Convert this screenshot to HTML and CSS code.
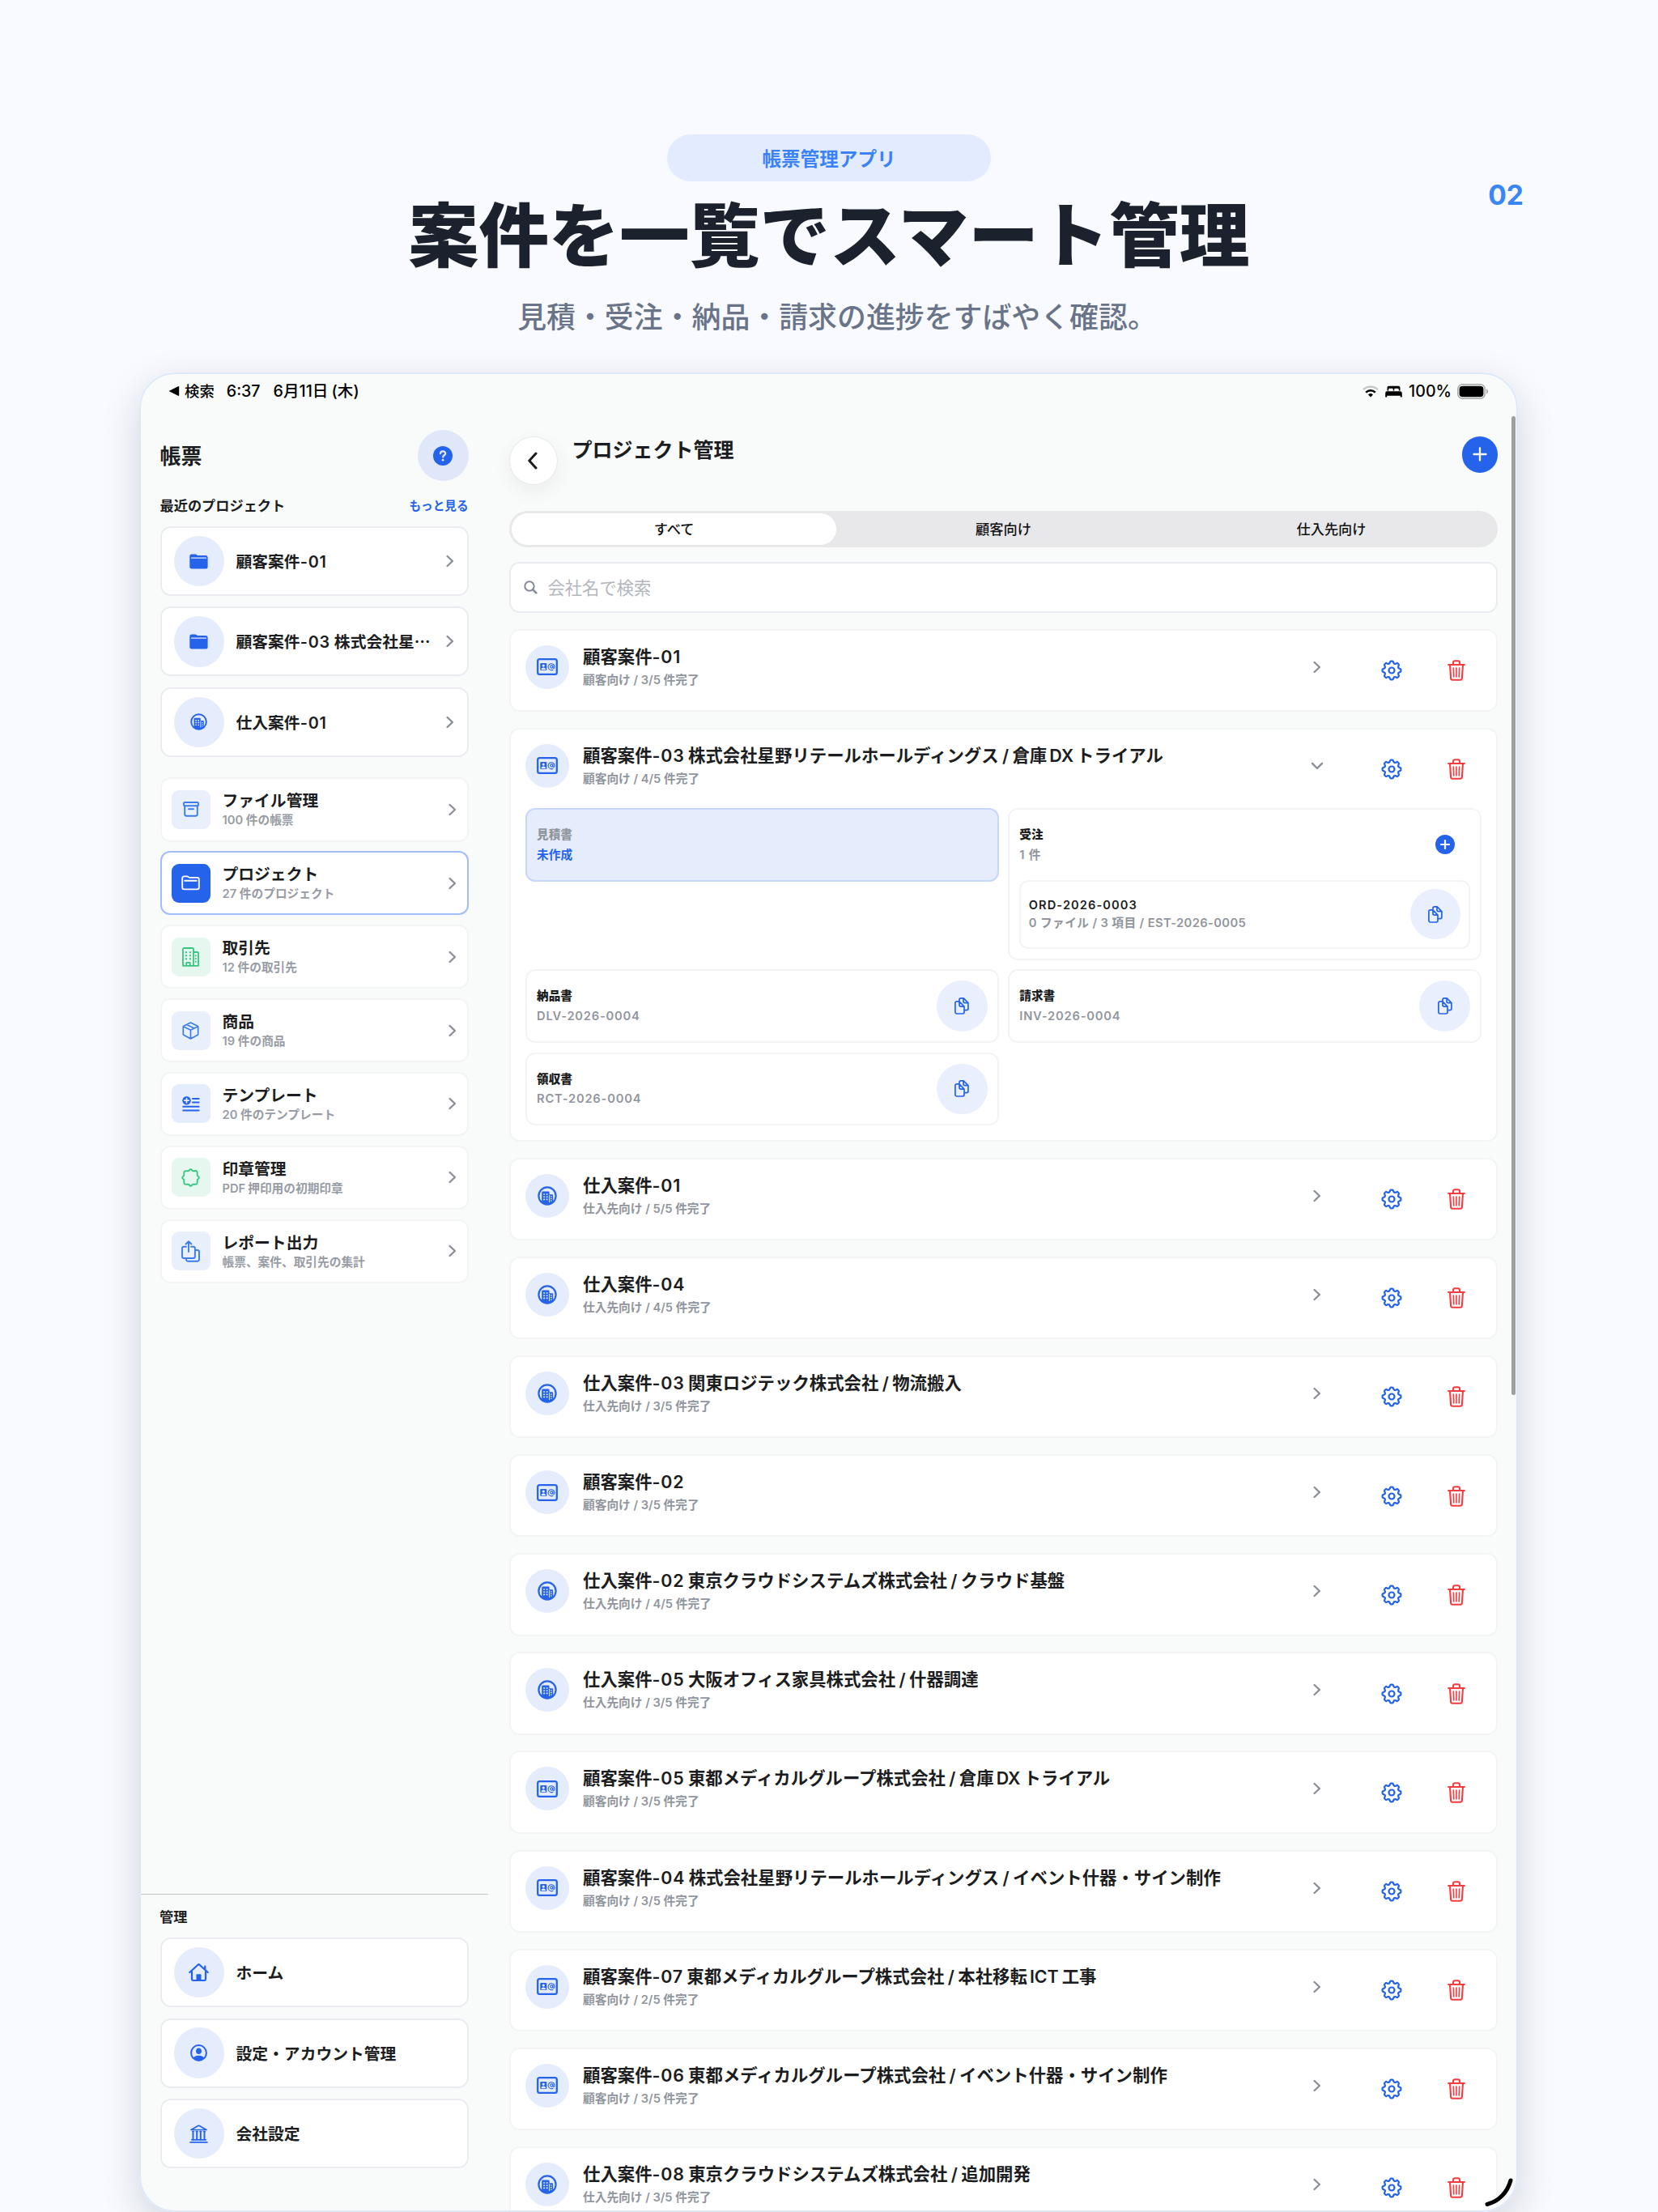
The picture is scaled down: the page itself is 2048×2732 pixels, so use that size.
FILE: index.html
```html
<!DOCTYPE html>
<html lang="ja">
<head>
<meta charset="utf-8">
<title>プロジェクト管理</title>
<link rel="stylesheet" href="styles.css">
</head>
<body>
<svg class="sprite" aria-hidden="true">
  <defs>
    <path id="tooth" d="M-3.44-8.31Q-2.54-8.68-2.2-9.6L-1.9-10.6Q-1.7-11.4-.9-11.4H.9Q1.7-11.4 1.9-10.6L2.2-9.6Q2.54-8.68 3.44-8.31"/>
  </defs>
  <symbol id="i-gear" viewBox="-13 -13 26 26"><g fill="none" stroke="currentColor" stroke-width="2.2" stroke-linecap="round">
    <use href="#tooth"/><use href="#tooth" transform="rotate(45)"/><use href="#tooth" transform="rotate(90)"/><use href="#tooth" transform="rotate(135)"/><use href="#tooth" transform="rotate(180)"/><use href="#tooth" transform="rotate(225)"/><use href="#tooth" transform="rotate(270)"/><use href="#tooth" transform="rotate(315)"/>
    <circle r="3.5"/></g></symbol>
  <symbol id="i-trash" viewBox="0 0 22 26"><g fill="none" stroke="currentColor" stroke-width="2.1" stroke-linecap="round" stroke-linejoin="round"><path d="M7 6V3.2a2 2 0 0 1 2-2h4a2 2 0 0 1 2 2V6M1.1 6H20.9M3 6l1.1 16.7a2.1 2.1 0 0 0 2.1 2h9.6a2.1 2.1 0 0 0 2.1-2L19 6"/><path stroke-width="1.6" d="M7.4 10l.4 11M11 10v11M14.6 10l-.4 11"/></g></symbol>
  <symbol id="i-right" viewBox="0 0 10 16"><path d="M1.6 2l6.3 6-6.3 6" fill="none" stroke="currentColor" stroke-width="2.4" stroke-linecap="round" stroke-linejoin="round"/></symbol>
  <symbol id="i-down" viewBox="0 0 16 10"><path d="M2 1.8l6 6.2 6-6.2" fill="none" stroke="currentColor" stroke-width="2.4" stroke-linecap="round" stroke-linejoin="round"/></symbol>
  <symbol id="i-back" viewBox="0 0 14 22"><path d="M11 2L2.8 11 11 20" fill="none" stroke="currentColor" stroke-width="3" stroke-linecap="round" stroke-linejoin="round"/></symbol>
  <symbol id="i-folder-fill" viewBox="0 0 23 19"><path fill="currentColor" d="M.3 2.8A2.5 2.5 0 0 1 2.8.4h4.4c1.6 0 1.8 1.5 3.4 1.5h9.3a2.6 2.6 0 0 1 2.7 2.4v11.6a2.6 2.6 0 0 1-2.7 2.6H3a2.7 2.7 0 0 1-2.7-2.7z"/><path d="M2.6 5.2h17.8" stroke="#e5ecfc" stroke-width="1.3" stroke-linecap="round"/></symbol>
  <symbol id="i-folder" viewBox="0 0 23 19"><path fill="none" stroke="currentColor" stroke-width="1.9" stroke-linejoin="round" d="M1.2 3.8a2.3 2.3 0 0 1 2.3-2.4h3.6c1.5 0 1.7 1.5 3.2 1.5h9.2a2.3 2.3 0 0 1 2.3 2.3v9.9a2.3 2.3 0 0 1-2.3 2.3h-16a2.3 2.3 0 0 1-2.3-2.3zM3.5 6.8h16"/></symbol>
  <symbol id="i-city" viewBox="0 0 24 24"><circle cx="12" cy="12" r="10.6" fill="none" stroke="currentColor" stroke-width="2.2"/><path fill="currentColor" d="M4.2 18.5h1V8a1.4 1.4 0 0 1 1.4-1.4h6.6A1.4 1.4 0 0 1 14.6 8v2.3h3.4a1.2 1.2 0 0 1 1.2 1.2v7h.8A10 10 0 0 1 4.2 18.500z"/><path stroke="#e5ecfc" stroke-width="1.6" d="M7.2 10h1.9M10.7 10h1.9M7.2 13.2h1.9M10.7 13.2h1.9M7.2 16.4h1.9M10.7 16.4h1.9"/><path stroke="#e5ecfc" stroke-width="1" d="M14.6 11v9M16 13h1.8M16 15.5h1.8M16 18h1.8"/></symbol>
  <symbol id="i-card" viewBox="0 0 26 21"><rect x="1.2" y="1.2" width="23.6" height="18.6" rx="2.4" fill="none" stroke="currentColor" stroke-width="2.3"/><rect x="4.3" y="6" width="8" height="9" rx="1" fill="currentColor"/><circle cx="8.3" cy="9.1" r="1.6" fill="#e5ecfc"/><path d="M5.5 14.2c0-3.7 5.6-3.7 5.6 0z" fill="#e5ecfc"/><g fill="none" stroke="currentColor" stroke-width="1.1"><path d="M20.4 14a4 4 0 1 1 1.7-3.5c0 2.5-2.2 2.3-2.2.7V8.900"/><circle cx="18.3" cy="10.5" r="1.6"/></g></symbol>
  <symbol id="i-copy" viewBox="0 0 18 21"><g fill="none" stroke="currentColor" stroke-width="1.7" stroke-linejoin="round"><path d="M6 4.8V2.8A1.9 1.9 0 0 1 7.9.9h3.3L16.9 6.6v7.2a1.9 1.9 0 0 1-1.9 1.9h-2.6M11 1v3.8a1.8 1.8 0 0 0 1.8 1.8h4"/><path d="M2.8 4.9h3.1l6.1 6.2v7a1.9 1.9 0 0 1-1.9 1.9H2.8A1.9 1.9 0 0 1 .9 18.1V6.8a1.9 1.9 0 0 1 1.9-1.9zM6 5v4.3a1.8 1.8 0 0 0 1.8 1.8H12"/></g></symbol>
  <symbol id="i-plus" viewBox="0 0 20 20"><path d="M10 2.5v15M2.500 10h15" stroke="currentColor" stroke-width="2.3" stroke-linecap="round"/></symbol>
</svg>

<header class="hero">
  <div class="hero-pill">帳票管理アプリ</div>
  <h1>案件を一覧でスマート管理</h1>
  <p>見積・受注・納品・請求の進捗をすばやく確認。</p>
  <div class="hero-no">02</div>
</header>

<div class="device">
  <div class="status">
    <div class="status-l">
      <svg width="14" height="14" viewBox="0 0 14 14"><path d="M.5 7L12 1.2a.8.8 0 0 1 1.2.8v10a.8.8 0 0 1-1.2.8z"/></svg>
      <span class="s-back">検索</span><span class="s-time">6:37</span><span class="s-date">6月11日 (木)</span>
    </div>
    <div class="status-r">
      <svg class="wifi" width="20" height="15" viewBox="0 0 20 15"><g fill="none" stroke="#000" stroke-width="2.4"><path stroke="#c4c6c5" d="M1 5.2a13 13 0 0 1 18 0"/><path d="M4.2 8.6a8.4 8.4 0 0 1 11.6 0"/></g><path d="M10 14.6l-3-3.2a4.4 4.4 0 0 1 6 0z"/></svg>
      <svg class="bed" width="21" height="15" viewBox="0 0 21 15"><path d="M2.5 6.5V2.8A2 2 0 0 1 4.5.8h12a2 2 0 0 1 2 2v3.7h-1.7V5a1.2 1.2 0 0 0-1.2-1.2h-3.2A1.2 1.2 0 0 0 11.2 5v1.5H9.8V5a1.2 1.2 0 0 0-1.2-1.2H5.4A1.2 1.2 0 0 0 4.2 5v1.5zM2.4 7.2h16.2A2.2 2.2 0 0 1 20.8 9.4V14.6H18.8V12.8H2.2V14.6H.2V9.4A2.2 2.2 0 0 1 2.4 7.200z"/></svg>
      <span>100%</span>
      <svg class="battery" width="39" height="19" viewBox="0 0 39 19"><rect x=".8" y=".8" width="33.4" height="17.4" rx="5.6" fill="none" stroke="#a6a8a7" stroke-width="1.5"/><rect x="2.6" y="2.7" width="29.8" height="13.6" rx="4"/><path d="M36 6.3a3.5 3.5 0 0 1 0 6.4z" fill="#a6a8a7"/></svg>
    </div>
  </div>

  <div class="body">
    <aside class="side">
      <div class="side-head"><h2>帳票</h2>
        <div class="help"><svg width="24" height="24" viewBox="0 0 24 24"><circle cx="12" cy="12" r="12" fill="#2563eb"/><path d="M9 9.2c.1-3.6 6.2-3.6 6.2-.2 0 2.3-3 2.2-3 4.500" fill="none" stroke="#e0e7f8" stroke-width="2.300" stroke-linecap="round"/><circle cx="12.1" cy="17.2" r="1.4" fill="#e0e7f8"/></svg></div></div>
      <div class="side-sub"><h3>最近のプロジェクト</h3><a>もっと見る</a></div>
      <div class="stack">
        <div class="link"><span class="dot"><svg width="23" height="19"><use href="#i-folder-fill"/></svg></span><b>顧客案件<i>-01</i></b><svg class="chev" width="10" height="16"><use href="#i-right"/></svg></div>
        <div class="link"><span class="dot"><svg width="23" height="19"><use href="#i-folder-fill"/></svg></span><b>顧客案件<i>-03</i> 株式会社星⋯</b><svg class="chev" width="10" height="16"><use href="#i-right"/></svg></div>
        <div class="link"><span class="dot"><svg width="21" height="21"><use href="#i-city"/></svg></span><b>仕入案件<i>-01</i></b><svg class="chev" width="10" height="16"><use href="#i-right"/></svg></div>
      </div>
      <nav class="menu">
        <div class="item"><span class="tile t-soft"><svg width="20" height="19" viewBox="0 0 20 19" fill="none" stroke="currentColor" stroke-width="1.9"><rect x="1" y="1" width="18" height="4.2" rx="1.3"/><path d="M2.2 5.2v10.2a2.3 2.3 0 0 0 2.3 2.3h11a2.3 2.3 0 0 0 2.3-2.3V5.2M7 9.3h6" stroke-linecap="round"/></svg></span><div><b>ファイル管理</b><small>100 件の帳票</small></div><svg class="chev" width="10" height="16"><use href="#i-right"/></svg></div>
        <div class="item on"><span class="tile t-on"><svg width="23" height="19"><use href="#i-folder"/></svg></span><div><b>プロジェクト</b><small>27 件のプロジェクト</small></div><svg class="chev" width="10" height="16"><use href="#i-right"/></svg></div>
        <div class="item"><span class="tile t-green"><svg width="21" height="24" viewBox="0 0 21 24" fill="none" stroke="currentColor" stroke-width="1.8" stroke-linejoin="round"><path d="M1 22.8V2.2A1.2 1.2 0 0 1 2.2 1h10.6A1.2 1.2 0 0 1 14 2.2v20.6zM14 6h4.8A1.2 1.2 0 0 1 20 7.2v15.6h-6M5.3 22.8v-4h4.4v4"/><path stroke-width="2" d="M4 6.2h2M9 6.2h2M4 10.2h2M9 10.2h2M4 14.2h2M9 14.2h2M16 10.2h1.6M16 14h1.6M16 17.8h1.6"/></svg></span><div><b>取引先</b><small>12 件の取引先</small></div><svg class="chev" width="10" height="16"><use href="#i-right"/></svg></div>
        <div class="item"><span class="tile t-soft"><svg width="21" height="22" viewBox="0 0 21 22" fill="none" stroke="currentColor" stroke-width="1.7" stroke-linejoin="round"><path d="M10.5 1l8.6 4.2a1 1 0 0 1 .6.9v9.3a1 1 0 0 1-.6.9l-8.6 4.700-8.6-4.700a1 1 0 0 1-.6-.9V6.100a1 1 0 0 1 .6-.9zM1.500 5.700l9 4.500 9-4.500M10.500 10.200V21M5.600 3.500l9.200 4.500"/></svg></span><div><b>商品</b><small>19 件の商品</small></div><svg class="chev" width="10" height="16"><use href="#i-right"/></svg></div>
        <div class="item"><span class="tile t-blue"><svg width="22" height="19" viewBox="0 0 22 19" fill="none" stroke="currentColor" stroke-width="2" stroke-linecap="round"><circle cx="5.5" cy="5.2" r="5.2" fill="currentColor" stroke="none"/><path stroke="#e5ecfc" stroke-width="1.7" d="M5.5 2.5v5.4M2.8 5.2h5.4"/><path d="M13 3h7.6M13 7.6h7.6M1.2 12.8h19.4M1.2 17.6h19.4"/></svg></span><div><b>テンプレート</b><small>20 件のテンプレート</small></div><svg class="chev" width="10" height="16"><use href="#i-right"/></svg></div>
        <div class="item"><span class="tile t-green"><svg width="23" height="23" viewBox="0 0 23 23" fill="none" stroke="currentColor" stroke-width="1.9" stroke-linejoin="round"><path d="M11.5 1.3Q12.4 1.3 13.2 2.4Q14 3.5 15.3 3.3Q18.7 2.6 19.2 3.8Q19.9 4.4 19.6 7.7Q19.5 9 20.6 9.8Q23.1 11.5 20.6 13.2Q19.5 14 19.7 15.3Q20 18.6 19.2 19.2Q18.6 19.9 15.3 19.7Q14 19.5 13.2 20.6Q11.5 23 9.8 20.6Q9 19.5 7.7 19.7Q4.4 20 3.8 19.2Q3.1 18.6 3.3 15.3Q3.5 14 2.4 13.2Q0 11.5 2.4 9.8Q3.5 9 3.3 7.7Q3 4.4 3.8 3.8Q4.4 3.1 7.7 3.3Q9 3.5 9.8 2.4Q10.6 1.3 11.5 1.3z"/></svg></span><div><b>印章管理</b><small><i class="gap-r">PDF</i>押印用の初期印章</small></div><svg class="chev" width="10" height="16"><use href="#i-right"/></svg></div>
        <div class="item"><span class="tile t-soft"><svg width="23" height="27" viewBox="0 0 23 27" fill="none" stroke="currentColor" stroke-width="1.9" stroke-linecap="round" stroke-linejoin="round"><path d="M6 7.8H3.3A2.3 2.3 0 0 0 1 10.1v9.6A2.3 2.3 0 0 0 3.3 22h11.3a2.3 2.3 0 0 0 2.3-2.3v-9.6a2.3 2.3 0 0 0-2.3-2.3H12M9 14V1.3M5.6 4.5L9 1.2l3.4 3.3M17.2 12h2.5a2.3 2.3 0 0 1 2.3 2.3v9.2a2.3 2.3 0 0 1-2.3 2.3H8.3A2.3 2.3 0 0 1 6 23.5v-1.3"/></svg></span><div><b>レポート出力</b><small>帳票、案件、取引先の集計</small></div><svg class="chev" width="10" height="16"><use href="#i-right"/></svg></div>
      </nav>
      <div class="side-foot">
        <h3>管理</h3>
        <div class="stack">
          <div class="link"><span class="dot"><svg width="25" height="22" viewBox="0 0 25 22" fill="none" stroke="currentColor" stroke-width="2.2" stroke-linecap="round" stroke-linejoin="round"><path d="M1.3 11L11.5 1.7a1.5 1.5 0 0 1 2 0L23.7 11M4 9.5v9.7a1.8 1.8 0 0 0 1.8 1.8h13.4a1.8 1.8 0 0 0 1.8-1.8V9.5M20.3 7.3V3.6"/><path d="M9.5 21v-6.8a1 1 0 0 1 1-1h4a1 1 0 0 1 1 1V21z" fill="currentColor" stroke="none"/></svg></span><b>ホーム</b></div>
          <div class="link"><span class="dot"><svg width="21" height="21" viewBox="0 0 21 21"><circle cx="10.5" cy="10.5" r="9.4" fill="none" stroke="currentColor" stroke-width="2"/><ellipse cx="10.5" cy="8.3" rx="3.4" ry="3.8" fill="currentColor"/><path d="M3.8 17c2-4.4 11.4-4.4 13.4 0a9.4 9.4 0 0 1-13.4 0z" fill="currentColor"/></svg></span><b>設定・アカウント管理</b></div>
          <div class="link"><span class="dot"><svg width="23" height="23" viewBox="0 0 23 23" fill="none" stroke="currentColor" stroke-width="1.7" stroke-linecap="round" stroke-linejoin="round"><path d="M2 6.5h19L12.3 1.6a1.7 1.7 0 0 0-1.6 0zM1 21.8h21M2.8 18.8h17.4"/><path d="M4.5 8.5v10M9.2 8.5v10M13.8 8.5v10M18.5 8.5v10" stroke-width="2"/><path d="M3.3 8.6h2.4M8 8.6h2.4M12.6 8.6H15M17.3 8.6h2.4" stroke-width="1"/></svg></span><b>会社設定</b></div>
        </div>
      </div>
    </aside>

    <main class="main">
      <div class="main-head"><span class="back"><svg width="14" height="22"><use href="#i-back"/></svg></span><h2>プロジェクト管理</h2><span class="add"><svg width="20" height="20"><use href="#i-plus"/></svg></span></div>
      <div class="seg"><span class="sel">すべて</span><span>顧客向け</span><span>仕入先向け</span></div>
      <div class="search"><svg width="17" height="17" viewBox="0 0 17 17" fill="none" stroke="#858b96" stroke-width="2" stroke-linecap="round"><circle cx="7" cy="7" r="5.7"/><path d="M11.3 11.3l4 4" stroke-width="2.6"/></svg><span>会社名で検索</span></div>
      <div class="list">
        <section class="row"><div class="top"><span class="av"><svg width="26" height="21"><use href="#i-card"/></svg></span><div class="tx"><b>顧客案件<i>-01</i></b><small>顧客向け / 3/5 件完了</small></div><span class="cv"><svg width="10" height="16"><use href="#i-right"/></svg></span><span class="gear"><svg width="26" height="26"><use href="#i-gear"/></svg></span><span class="del"><svg width="22" height="26"><use href="#i-trash"/></svg></span></div></section>
        <section class="row"><div class="top"><span class="av"><svg width="26" height="21"><use href="#i-card"/></svg></span><div class="tx"><b>顧客案件<i>-03</i> 株式会社星野リテールホールディングス / 倉庫<i class="gap">DX</i>トライアル</b><small>顧客向け / 4/5 件完了</small></div><span class="cv"><svg width="16" height="10"><use href="#i-down"/></svg></span><span class="gear"><svg width="26" height="26"><use href="#i-gear"/></svg></span><span class="del"><svg width="22" height="26"><use href="#i-trash"/></svg></span></div>
          <div class="docs">
            <div class="doc todo"><div class="line"><div><b>見積書</b><small>未作成</small></div></div></div>
            <div class="doc tall"><div class="line"><div><b>受注</b><small>1 件</small></div><span class="plus"><svg width="24" height="24" viewBox="0 0 24 24"><circle cx="12" cy="12" r="12" fill="#2563eb"/><path d="M12 7v10M7 12h10" stroke="#fff" stroke-width="2.2" stroke-linecap="round"/></svg></span></div>
              <div class="sub"><div><b>ORD-2026-0003</b><small>0 ファイル / 3 項目 / EST-2026-0005</small></div><span class="cp"><svg width="18" height="21"><use href="#i-copy"/></svg></span></div></div>
            <div class="doc"><div class="line"><div><b>納品書</b><small>DLV-2026-0004</small></div><span class="cp"><svg width="18" height="21"><use href="#i-copy"/></svg></span></div></div>
            <div class="doc"><div class="line"><div><b>請求書</b><small>INV-2026-0004</small></div><span class="cp"><svg width="18" height="21"><use href="#i-copy"/></svg></span></div></div>
            <div class="doc"><div class="line"><div><b>領収書</b><small>RCT-2026-0004</small></div><span class="cp"><svg width="18" height="21"><use href="#i-copy"/></svg></span></div></div>
          </div></section>
        <section class="row"><div class="top"><span class="av"><svg width="24" height="24"><use href="#i-city"/></svg></span><div class="tx"><b>仕入案件<i>-01</i></b><small>仕入先向け / 5/5 件完了</small></div><span class="cv"><svg width="10" height="16"><use href="#i-right"/></svg></span><span class="gear"><svg width="26" height="26"><use href="#i-gear"/></svg></span><span class="del"><svg width="22" height="26"><use href="#i-trash"/></svg></span></div></section>
        <section class="row"><div class="top"><span class="av"><svg width="24" height="24"><use href="#i-city"/></svg></span><div class="tx"><b>仕入案件<i>-04</i></b><small>仕入先向け / 4/5 件完了</small></div><span class="cv"><svg width="10" height="16"><use href="#i-right"/></svg></span><span class="gear"><svg width="26" height="26"><use href="#i-gear"/></svg></span><span class="del"><svg width="22" height="26"><use href="#i-trash"/></svg></span></div></section>
        <section class="row"><div class="top"><span class="av"><svg width="24" height="24"><use href="#i-city"/></svg></span><div class="tx"><b>仕入案件<i>-03</i> 関東ロジテック株式会社 / 物流搬入</b><small>仕入先向け / 3/5 件完了</small></div><span class="cv"><svg width="10" height="16"><use href="#i-right"/></svg></span><span class="gear"><svg width="26" height="26"><use href="#i-gear"/></svg></span><span class="del"><svg width="22" height="26"><use href="#i-trash"/></svg></span></div></section>
        <section class="row"><div class="top"><span class="av"><svg width="26" height="21"><use href="#i-card"/></svg></span><div class="tx"><b>顧客案件<i>-02</i></b><small>顧客向け / 3/5 件完了</small></div><span class="cv"><svg width="10" height="16"><use href="#i-right"/></svg></span><span class="gear"><svg width="26" height="26"><use href="#i-gear"/></svg></span><span class="del"><svg width="22" height="26"><use href="#i-trash"/></svg></span></div></section>
        <section class="row"><div class="top"><span class="av"><svg width="24" height="24"><use href="#i-city"/></svg></span><div class="tx"><b>仕入案件<i>-02</i> 東京クラウドシステムズ株式会社 / クラウド基盤</b><small>仕入先向け / 4/5 件完了</small></div><span class="cv"><svg width="10" height="16"><use href="#i-right"/></svg></span><span class="gear"><svg width="26" height="26"><use href="#i-gear"/></svg></span><span class="del"><svg width="22" height="26"><use href="#i-trash"/></svg></span></div></section>
        <section class="row"><div class="top"><span class="av"><svg width="24" height="24"><use href="#i-city"/></svg></span><div class="tx"><b>仕入案件<i>-05</i> 大阪オフィス家具株式会社 / 什器調達</b><small>仕入先向け / 3/5 件完了</small></div><span class="cv"><svg width="10" height="16"><use href="#i-right"/></svg></span><span class="gear"><svg width="26" height="26"><use href="#i-gear"/></svg></span><span class="del"><svg width="22" height="26"><use href="#i-trash"/></svg></span></div></section>
        <section class="row"><div class="top"><span class="av"><svg width="26" height="21"><use href="#i-card"/></svg></span><div class="tx"><b>顧客案件<i>-05</i> 東都メディカルグループ株式会社 / 倉庫<i class="gap">DX</i>トライアル</b><small>顧客向け / 3/5 件完了</small></div><span class="cv"><svg width="10" height="16"><use href="#i-right"/></svg></span><span class="gear"><svg width="26" height="26"><use href="#i-gear"/></svg></span><span class="del"><svg width="22" height="26"><use href="#i-trash"/></svg></span></div></section>
        <section class="row"><div class="top"><span class="av"><svg width="26" height="21"><use href="#i-card"/></svg></span><div class="tx"><b>顧客案件<i>-04</i> 株式会社星野リテールホールディングス / イベント什器・サイン制作</b><small>顧客向け / 3/5 件完了</small></div><span class="cv"><svg width="10" height="16"><use href="#i-right"/></svg></span><span class="gear"><svg width="26" height="26"><use href="#i-gear"/></svg></span><span class="del"><svg width="22" height="26"><use href="#i-trash"/></svg></span></div></section>
        <section class="row"><div class="top"><span class="av"><svg width="26" height="21"><use href="#i-card"/></svg></span><div class="tx"><b>顧客案件<i>-07</i> 東都メディカルグループ株式会社 / 本社移転<i class="gap">ICT</i>工事</b><small>顧客向け / 2/5 件完了</small></div><span class="cv"><svg width="10" height="16"><use href="#i-right"/></svg></span><span class="gear"><svg width="26" height="26"><use href="#i-gear"/></svg></span><span class="del"><svg width="22" height="26"><use href="#i-trash"/></svg></span></div></section>
        <section class="row"><div class="top"><span class="av"><svg width="26" height="21"><use href="#i-card"/></svg></span><div class="tx"><b>顧客案件<i>-06</i> 東都メディカルグループ株式会社 / イベント什器・サイン制作</b><small>顧客向け / 3/5 件完了</small></div><span class="cv"><svg width="10" height="16"><use href="#i-right"/></svg></span><span class="gear"><svg width="26" height="26"><use href="#i-gear"/></svg></span><span class="del"><svg width="22" height="26"><use href="#i-trash"/></svg></span></div></section>
        <section class="row"><div class="top"><span class="av"><svg width="24" height="24"><use href="#i-city"/></svg></span><div class="tx"><b>仕入案件<i>-08</i> 東京クラウドシステムズ株式会社 / 追加開発</b><small>仕入先向け / 3/5 件完了</small></div><span class="cv"><svg width="10" height="16"><use href="#i-right"/></svg></span><span class="gear"><svg width="26" height="26"><use href="#i-gear"/></svg></span><span class="del"><svg width="22" height="26"><use href="#i-trash"/></svg></span></div></section>
      </div>
    </main>
  </div>
  <div class="scrollbar"></div>
  <svg class="corner" width="40" height="40" viewBox="0 0 40 40"><path d="M5 34.5C19 31 30 20 34 5" fill="none" stroke="#000" stroke-width="5" stroke-linecap="round"/></svg>
</div>
</body>
</html>
```
FILE: styles.css
```css
* { box-sizing: border-box; margin: 0; }
body {
  width: 2048px; height: 2732px; overflow: hidden;
  background: #f8faff;
  color: #1c1d21;
  font-family: Inter, "Noto Sans CJK JP", sans-serif;
}
svg { display: block; flex: none; }
.sprite { position: absolute; width: 0; height: 0; }
b { font-weight: 600; white-space: nowrap; }
b i, small i { font-style: normal; }
b i { letter-spacing: .8px; }
b .gap { letter-spacing: 0; margin: 0 4px 0 3px; }
.gap-r { margin-right: 3px; }
small { font-weight: 600; white-space: nowrap; }

/* headline */
.hero { height: 460px; padding-top: 166px; display: flex; flex-direction: column; align-items: center; position: relative; }
.hero-pill { width: 400px; height: 58px; padding-top: 1.5px; border-radius: 29px; background: #e3ecfe; color: #3b82f6; font-size: 23.6px; font-weight: 700; line-height: 58px; text-align: center; }
.hero h1 { margin-top: 12px; font-size: 86.8px; line-height: 112px; font-weight: 900; color: #1b212d; white-space: nowrap; }
.hero p { margin-top: 19px; padding-left: 20px; font-size: 35.9px; line-height: 50px; font-weight: 500; color: #6a7489; white-space: nowrap; }
.hero-no { position: absolute; right: 166px; top: 221px; font-size: 33.6px; line-height: 40px; font-weight: 700; color: #3b86f5; }

/* device */
.device { position: relative; width: 1703px; height: 2272px; margin-left: 172px; border-radius: 44px; background: #f9fbfa; overflow: hidden; box-shadow: 0 16px 48px rgba(20, 25, 50, .16); display: flex; flex-direction: column; }
.device::after { content: ""; position: absolute; inset: 0; border-radius: 44px; border: 2px solid #dde9fa; pointer-events: none; }

.status { height: 46px; flex: none; display: flex; justify-content: space-between; align-items: center; padding: 0 36px; color: #000; font-size: 19.6px; font-weight: 500; line-height: 24px; }
.status-l, .status-r { display: flex; align-items: center; white-space: nowrap; }
.s-back { margin-left: 6px; font-size: 18.4px; }
.s-time { margin-left: 15px; }
.s-date { margin-left: 16px; word-spacing: -1px; }
.bed { margin-left: 8px; }
.status-r span { margin: 0 7px 0 8px; }

.body { flex: 1; min-height: 0; display: flex; }

/* sidebar */
.side { width: 431px; flex: none; padding-top: 25px; display: flex; flex-direction: column; }
.side-head, .side-sub, .stack, .menu { margin-left: 25.5px; width: 381px; }
.side-head { height: 63px; display: flex; justify-content: space-between; align-items: center; }
.side-head h2 { font-size: 26px; font-weight: 600; padding-bottom: 3px; }
.help { width: 63px; height: 63px; border-radius: 50%; background: #e0e7f8; display: grid; place-items: center; }
.side-sub { margin-top: 19px; height: 24px; display: flex; justify-content: space-between; align-items: center; }
h3 { font-size: 17.2px; line-height: 24px; font-weight: 600; }
.side-sub a { font-size: 14.6px; font-weight: 600; color: #2563eb; padding-bottom: 3px; }
.stack { display: flex; flex-direction: column; gap: 13.4px; margin-top: 13px; }
.link { height: 86px; border: 2px solid #ebecf1; border-radius: 13px; background: #fff; display: flex; align-items: center; padding: 0 16px 0 15px; }
.dot { width: 62.5px; height: 62.5px; border-radius: 50%; background: #e5ecfc; color: #2563eb; display: grid; place-items: center; margin-right: 14.5px; flex: none; }
.link b { flex: 1; font-size: 19.8px; padding-bottom: 1px; }
.chev { color: #8b8f98; }
.menu { margin-top: 25.5px; display: flex; flex-direction: column; gap: 11.6px; }
.item { height: 79.3px; border: 2px solid #f3f4f6; border-radius: 12px; background: #fff; display: flex; align-items: center; padding: 0 13px 0 12px; }
.item.on { border-color: #a3bdf9; }
.item div { flex: 1; margin-left: 15px; display: flex; flex-direction: column; }
.item b { font-size: 19.8px; line-height: 26px; }
.item small { font-size: 14.7px; line-height: 20px; margin-top: 1px; color: #989ca4; }
.tile { width: 48px; height: 48px; border-radius: 9px; display: grid; place-items: center; }
.t-soft { background: #e9effb; color: #3b7de9; }
.t-blue { background: #e5ecfc; color: #2563eb; }
.t-on { background: #2563eb; color: #fff; }
.t-green { background: #e6f7ef; color: #34c77f; }
.side-foot { margin-top: auto; padding-bottom: 54px; border-top: 1px solid #c3c6c7; }
.side-foot h3 { margin: 16px 0 0 25px; }

/* main */
.main { flex: 1; padding: 33px 25px 0 26px; min-width: 0; }
.main-head { height: 60px; display: flex; align-items: flex-start; }
.back { width: 60px; height: 60px; border-radius: 50%; background: #fff; border: 1px solid #e6e8ec; box-shadow: 0 8px 24px rgba(0, 0, 0, .06); display: grid; place-items: center; padding-right: 3px; color: #1c1d21; }
.main-head h2 { flex: 1; margin-left: 17.5px; font-size: 25px; line-height: 34px; font-weight: 600; }
.add { width: 44.5px; height: 44.5px; border-radius: 50%; background: #2563eb; color: #fff; display: grid; place-items: center; }
.seg { margin-top: 31.5px; height: 45.5px; border-radius: 23px; background: #e8e8ea; display: grid; grid-template-columns: 1fr 1fr 1fr; padding: 3px; color: #111; font-size: 17.2px; font-weight: 500; line-height: 39.5px; text-align: center; }
.seg .sel { background: #fff; border-radius: 20px; margin-right: 4px; }
.search { margin-top: 18px; height: 63.4px; border: 2px solid #ebecf1; border-radius: 13px; background: #fff; display: flex; align-items: center; gap: 12.5px; padding-left: 16px; font-size: 21.3px; color: #b3b7bd; }
.search span { padding-bottom: 2.5px; }
.list { margin-top: 19.3px; display: flex; flex-direction: column; gap: 19.9px; }
.row { border: 2px solid #f3f4f6; border-radius: 13px; background: #fff; padding: 18px; flex: none; }
.top { height: 62.2px; display: flex; align-items: flex-start; }
.av { width: 54px; height: 54px; border-radius: 50%; background: #e5ecfc; color: #2563eb; display: grid; place-items: center; flex: none; }
.tx { flex: 1; margin-left: 17px; display: flex; flex-direction: column; }
.tx b { font-size: 21.4px; line-height: 28px; word-spacing: -1px; }
.tx small { font-size: 14.7px; line-height: 20px; margin-top: 5px; color: #91959d; }
.cv { width: 20px; height: 54px; display: grid; place-items: center; color: #8b8f98; }
.gear, .del { width: 62.5px; height: 62.5px; display: grid; place-items: center; }
.gear { margin-left: 51.5px; color: #2563eb; }
.del { margin-left: 17px; color: #f83b3f; }

.docs { margin-top: 17px; display: grid; grid-template-columns: 1fr 1fr; gap: 11.5px; align-items: start; }
.doc { border: 2px solid #f3f4f6; border-radius: 12px; padding: 12.05px; }
.doc.todo { background: #e5ecfc; border-color: #c6d6fc; }
.line { height: 62.5px; display: flex; align-items: center; justify-content: space-between; }
.line div, .sub div { display: flex; flex-direction: column; }
.doc b { font-size: 14.6px; line-height: 20px; font-weight: 800; }
.doc small { font-size: 14.7px; line-height: 20px; margin-top: 4.5px; color: #91959d; letter-spacing: .8px; }
.doc.todo b { color: #91959d; }
.doc.todo small { color: #2563eb; letter-spacing: 0; }
.plus, .cp { width: 62.5px; height: 62.5px; border-radius: 50%; display: grid; place-items: center; flex: none; }
.cp { background: #e9effd; color: #2563eb; }
.doc .sub { margin-top: 12px; height: 85.4px; border: 2px solid #f3f4f6; border-radius: 11px; display: flex; align-items: center; justify-content: space-between; padding: 0 9.5px; }
.doc .sub b { font-weight: 600; letter-spacing: 1.1px; }
.doc .sub small { margin-top: 2px; letter-spacing: .4px; }

.scrollbar { position: absolute; left: 1695px; top: 54px; width: 4.5px; height: 1209px; border-radius: 3px; background: #9d9f9e; z-index: 2; }
.corner { position: absolute; left: 1660px; top: 2227.5px; z-index: 2; }
```
